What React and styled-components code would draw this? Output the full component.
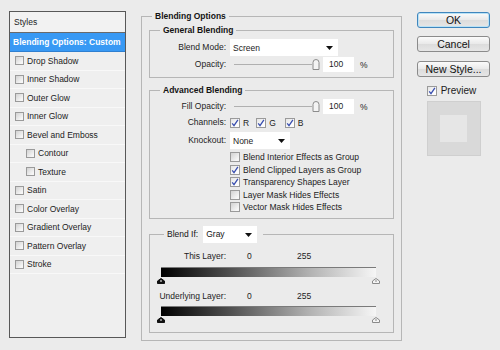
import React from 'react';
import styled, { createGlobalStyle } from 'styled-components';

const Global = createGlobalStyle`
  html, body { margin: 0; padding: 0; background: #ebebeb; }
  body {
    font-family: "Liberation Sans", Arial, sans-serif;
    font-size: 8.5px;
    color: #1c1c1c;
  }
`;

const Window = styled.div`
  box-sizing: border-box;
  width: 500px;
  height: 350px;
  display: flex;
  align-items: flex-start;
  padding: 11px 0 0 9px;
`;

/* ---------- styles list ---------- */

const StylesPanel = styled.div`
  box-sizing: border-box;
  width: 117px;
  height: 327px;
  border: 1px solid #585858;
  background: #efefef;
  display: flex;
  flex-direction: column;
`;

const PanelHead = styled.div`
  height: 20px;
  display: flex;
  align-items: center;
  padding-left: 4px;
  border-bottom: 1px solid #6a6a6a;
  background: #f2f2f2;
`;

const ActiveRow = styled.div`
  height: 18px;
  display: flex;
  align-items: center;
  padding-left: 3px;
  background: #3899f4;
  border-bottom: 1px solid #2f7fd0;
  color: #fff;
  font-weight: bold;
`;

const StyleRow = styled.div`
  height: 17.5px;
  display: flex;
  align-items: center;
  gap: 3px;
  padding-left: ${p => (p.$nested ? 16 : 5)}px;
  border-bottom: 1px solid #f8f8f8;
`;

const Box = styled.span`
  box-sizing: border-box;
  width: ${p => p.$size || 10}px;
  height: ${p => p.$size || 10}px;
  flex: none;
  border: 1px solid #9a9a9a;
  background: ${p => (p.$on ? 'linear-gradient(135deg, #e4e4e4, #fdfdfd 70%)' : 'linear-gradient(135deg, #d2d2d2, #f6f6f6 80%)')};
  display: inline-flex;
  align-items: center;
  justify-content: center;
`;

const Check = ({ on, size }) => (
  <Box $on={on} $size={size}>
    {on && (
      <svg width="8" height="8" viewBox="0 0 8 8">
        <path d="M1.2 4.3 L3 6.6 L6.9 0.8" fill="none" stroke="#3a4fb0" strokeWidth="1.3" />
      </svg>
    )}
  </Box>
);

/* ---------- group boxes ---------- */

const Group = styled.fieldset`
  box-sizing: border-box;
  min-width: 0;
  margin: ${p => p.$mt || 0}px 0 0 ${p => p.$ml || 0}px;
  padding: ${p => p.$pad};
  border: 1px solid #b6b6b6;
  width: ${p => (p.$w ? `${p.$w}px` : 'auto')};
`;

const Legend = styled.legend`
  margin-left: ${p => p.$indent}px;
  padding: 0 3px;
  height: ${p => p.$h || 10}px;
  line-height: ${p => p.$h || 10}px;
  font-weight: bold;
  color: #141414;
  display: flex;
  align-items: center;
  gap: 5px;
`;

const PlainLegend = styled(Legend)`
  font-weight: normal;
  padding-right: 6px;
`;

const Form = styled.div`
  display: grid;
  grid-template-columns: 76px 1fr;
  column-gap: 4px;
  row-gap: ${p => p.$gap}px;
  align-items: center;
`;

const Label = styled.span`
  text-align: right;
  white-space: nowrap;
  line-height: 11px;
`;

const Field = styled.div`
  display: flex;
  align-items: center;
  height: ${p => p.$h}px;
  margin-top: ${p => p.$mt || 0}px;
`;

const Select = styled.div`
  box-sizing: border-box;
  width: ${p => p.$w}px;
  height: 17px;
  background: #fff;
  display: flex;
  align-items: center;
  justify-content: space-between;
  padding: 1px 5px 0 3px;
  font-weight: normal;
`;

const Arrow = () => (
  <svg width="7" height="4" viewBox="0 0 7 4">
    <polygon points="0,0 7,0 3.5,4" fill="#111" />
  </svg>
);

const Track = styled.div`
  width: 90px;
  display: flex;
  align-items: center;
`;

const Line = styled.div`
  flex: 1;
  height: 1px;
  margin-left: 4px;
  background: #b0b0b0;
`;

const Knob = () => (
  <svg width="8" height="11" viewBox="0 0 8 11">
    <path d="M1 10.5 V3.5 Q1 0.5 4 0.5 Q7 0.5 7 3.5 V10.5 Z" fill="#f4f4f4" stroke="#8c8c8c" />
  </svg>
);

const NumInput = styled.div`
  box-sizing: border-box;
  width: 31px;
  height: 15px;
  margin-left: 3px;
  background: #fff;
  padding: 2px 0 0 6px;
  line-height: 11px;
`;

const Unit = styled.span`
  margin-left: 6px;
`;

const Channel = styled.label`
  display: flex;
  align-items: center;
  gap: 3px;
  margin-right: ${p => p.$mr}px;
`;

const Options = styled.div`
  grid-column: 2;
  display: flex;
  flex-direction: column;
`;

const Option = styled.label`
  height: 12.5px;
  display: flex;
  align-items: center;
  gap: 3px;
`;

/* ---------- blend if ---------- */

const LayerRow = styled.div`
  display: grid;
  grid-template-columns: 76px 13px 46px auto;
  column-gap: 4px;
  height: 11px;
  line-height: 11px;
  margin-top: ${p => p.$mt}px;
`;

const Ramp = styled.div`
  box-sizing: border-box;
  width: 215px;
  height: 10px;
  margin: ${p => p.$mt}px 0 0 11px;
  background: linear-gradient(to right, #000 0%, #4a4a4a 30%, #b4b4b4 70%, #f6f6f6 100%);
  border-top: 1px solid #7a7a7a;
`;

const Stops = styled.div`
  width: 223px;
  height: 6px;
  margin: 1px 0 0 7px;
  display: flex;
  justify-content: space-between;
`;

const Stop = ({ dark }) => (
  <svg width="8" height="6" viewBox="0 0 8 6">
    <path d="M0.5 5.5 V3 L4 0.5 L7.5 3 V5.5 Z" fill={dark ? '#111' : '#f4f4f4'} stroke={dark ? '#111' : '#8a8a8a'} />
    <line x1="4" y1="2" x2="4" y2="4" stroke={dark ? '#fff' : '#8a8a8a'} />
  </svg>
);

/* ---------- buttons / preview ---------- */

const Side = styled.div`
  width: 73px;
  margin-left: 15px;
  padding-top: 1px;
  display: flex;
  flex-direction: column;
  align-items: center;
`;

const Button = styled.button`
  box-sizing: border-box;
  width: 73px;
  height: 16px;
  margin-bottom: ${p => p.$mb}px;
  padding: 0;
  font-family: "Liberation Sans", Arial, sans-serif;
  font-size: 10.5px;
  color: #111;
  border-radius: 3px;
  border: 1px solid ${p => (p.$primary ? '#3f86bd' : '#8b8b8b')};
  box-shadow: ${p => (p.$primary ? 'inset 0 0 0 1px #b9e2f6' : 'none')};
  background: linear-gradient(#fbfbfb, #e9e9e9 50%, #dcdcdc 51%, #e6e6e6);
`;

const PreviewToggle = styled.label`
  display: flex;
  align-items: center;
  gap: 4px;
  font-size: 10px;
  height: 13px;
  margin-left: -4px;
`;

const PreviewBox = styled.div`
  box-sizing: border-box;
  width: 54px;
  height: 55px;
  margin-top: 4px;
  background: #d9d9d9;
  border: 1px solid #cfcfcf;
  display: flex;
  align-items: center;
  justify-content: center;
`;

const Swatch = styled.div`
  width: 27px;
  height: 27px;
  background: #e6e6e6;
`;

const effects = [
  { name: 'Drop Shadow' },
  { name: 'Inner Shadow' },
  { name: 'Outer Glow' },
  { name: 'Inner Glow' },
  { name: 'Bevel and Emboss' },
  { name: 'Contour', nested: true },
  { name: 'Texture', nested: true },
  { name: 'Satin' },
  { name: 'Color Overlay' },
  { name: 'Gradient Overlay' },
  { name: 'Pattern Overlay' },
  { name: 'Stroke' },
];

const advanced = [
  { name: 'Blend Interior Effects as Group', on: false },
  { name: 'Blend Clipped Layers as Group', on: true },
  { name: 'Transparency Shapes Layer', on: true },
  { name: 'Layer Mask Hides Effects', on: false },
  { name: 'Vector Mask Hides Effects', on: false },
];

const Slider = ({ value }) => (
  <Field $h={15}>
    <Track>
      <Line />
      <Knob />
    </Track>
    <NumInput>{value}</NumInput>
    <Unit>%</Unit>
  </Field>
);

export default function App() {
  return (
    <>
      <Global />
      <Window>
        <StylesPanel>
          <PanelHead>Styles</PanelHead>
          <ActiveRow>Blending Options: Custom</ActiveRow>
          {effects.map(e => (
            <StyleRow key={e.name} $nested={e.nested}>
              <Check size={9} />
              {e.name}
            </StyleRow>
          ))}
        </StylesPanel>

        <Group $w={261} $ml={15} $pad="0 7px 7px 7px">
          <Legend $indent={3}>Blending Options</Legend>

          <Group $mt={4} $pad="4px 0 5px 0">
            <Legend $indent={10}>General Blending</Legend>
            <Form $gap={1}>
              <Label>Blend Mode:</Label>
              <Select $w={108}>Screen<Arrow /></Select>
              <Label>Opacity:</Label>
              <Slider value="100" />
            </Form>
          </Group>

          <Group $mt={7} $pad="4px 0 4px 0">
            <Legend $indent={10}>Advanced Blending</Legend>
            <Form $gap={2}>
              <Label>Fill Opacity:</Label>
              <Slider value="100" />
              <Label>Channels:</Label>
              <Field $h={13}>
                <Channel $mr={7}><Check on />R</Channel>
                <Channel $mr={9}><Check on />G</Channel>
                <Channel $mr={0}><Check on />B</Channel>
              </Field>
              <Label>Knockout:</Label>
              <Field $h={17} $mt={1}>
                <Select $w={60}>None<Arrow /></Select>
              </Field>
              <Options>
                {advanced.map(o => (
                  <Option key={o.name}>
                    <Check on={o.on} />
                    {o.name}
                  </Option>
                ))}
              </Options>
            </Form>
          </Group>

          <Group $mt={7} $pad="8px 0 9px 0">
            <PlainLegend $indent={14} $h={17}>
              Blend If:
              <Select $w={54}>Gray<Arrow /></Select>
            </PlainLegend>
            <LayerRow $mt={0}>
              <Label>This Layer:</Label>
              <span />
              <span>0</span>
              <span>255</span>
            </LayerRow>
            <Ramp $mt={5} />
            <Stops>
              <Stop dark />
              <Stop />
            </Stops>
            <LayerRow $mt={7}>
              <Label>Underlying Layer:</Label>
              <span />
              <span>0</span>
              <span>255</span>
            </LayerRow>
            <Ramp $mt={4} />
            <Stops>
              <Stop dark />
              <Stop />
            </Stops>
          </Group>
        </Group>

        <Side>
          <Button $primary $mb={8}>OK</Button>
          <Button $mb={9}>Cancel</Button>
          <Button $mb={7}>New Style...</Button>
          <PreviewToggle>
            <Check on />
            Preview
          </PreviewToggle>
          <PreviewBox>
            <Swatch />
          </PreviewBox>
        </Side>
      </Window>
    </>
  );
}
